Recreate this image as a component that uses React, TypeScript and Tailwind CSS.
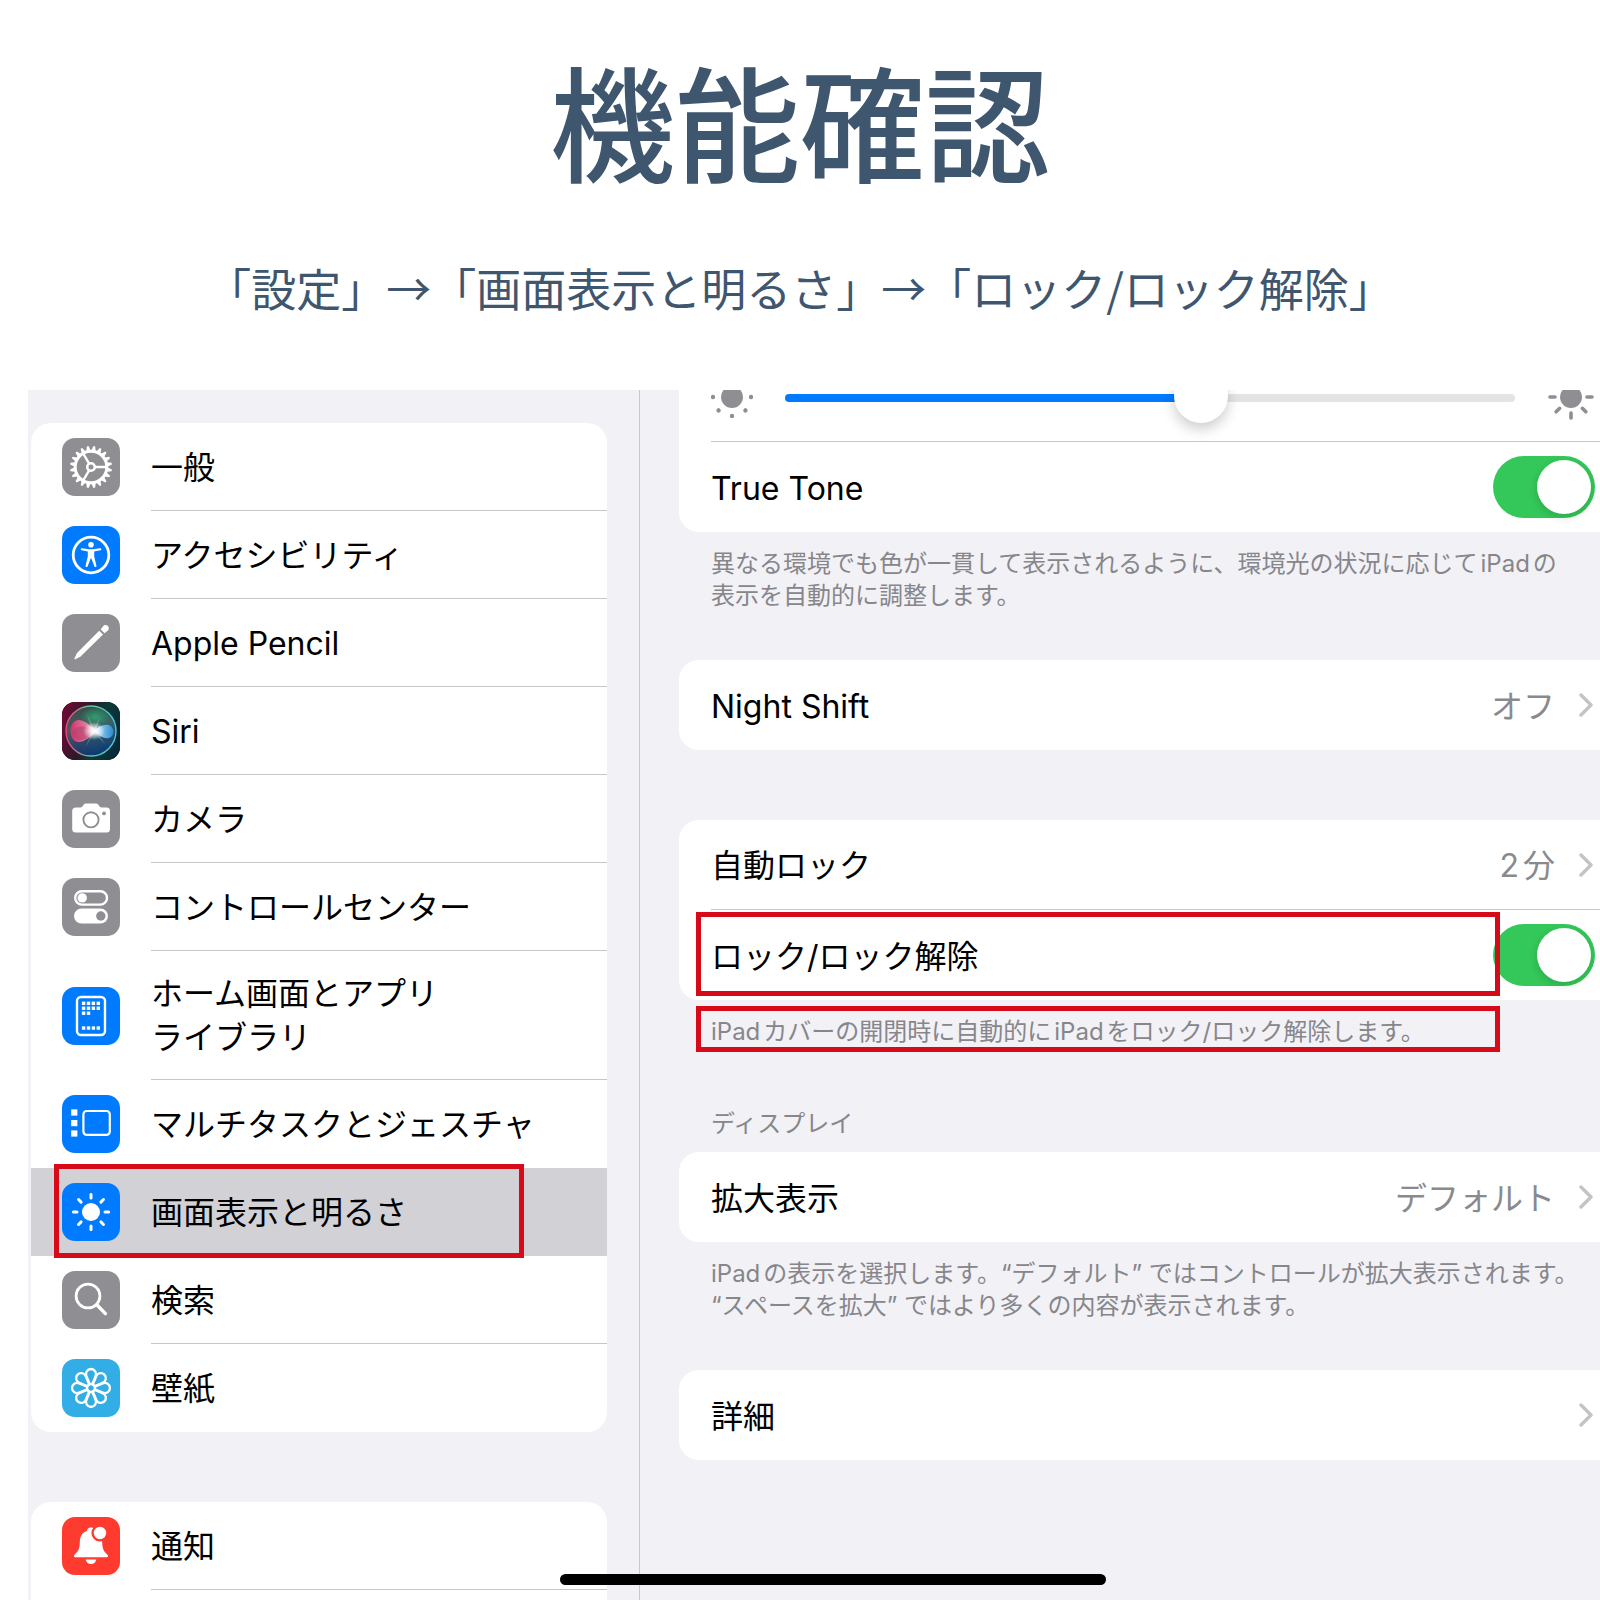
import { useState } from "react"
import type { ReactNode } from "react"

type MenuItem = {
    title: string[];
    icon: ReactNode;
    tint: string;
    line: boolean;
    tall?: boolean;
    selected?: boolean;
}

const rays = [0, 45, 90, 135, 180, 225, 270, 315];
const teeth = Array.from({ length: 20 }, (_, i) => (i * 360) / 20 + 9);

function GearIcon() {
    return (
        <g>
            <circle cx="29" cy="29" r="15.8" fill="none" stroke="#fff" strokeWidth="3" />
            {teeth.map((angle) => (
                <path key={angle} d="M26.9 12.4 L28.1 8 H29.9 L31.1 12.4 Z" fill="#fff" transform={`rotate(${angle} 29 29)`} />
            ))}
            {[0, 120, 240].map((angle) => (
                <path key={angle} d="M32.5 29 H44" stroke="#fff" strokeWidth="2.4" transform={`rotate(${angle} 29 29)`} />
            ))}
            <circle cx="29" cy="29" r="3.8" fill="none" stroke="#fff" strokeWidth="2.6" />
        </g>
    );
}

function AccessibilityIcon() {
    return (
        <g>
            <circle cx="29" cy="29" r="17.8" fill="none" stroke="#fff" strokeWidth="2.8" />
            <circle cx="29" cy="18.8" r="2.8" fill="#fff" />
            <path
                d="M19.8 22.3 L27 23.2 H31 L38.2 22.3 A1 1 0 0 1 38.4 24.3 L32.2 25.6 V30.5 L34.4 39.6 A1.1 1.1 0 0 1 32.3 40.3 L29.4 32.6 H28.6 L25.7 40.3 A1.1 1.1 0 0 1 23.6 39.6 L25.8 30.5 V25.6 L19.6 24.3 A1 1 0 0 1 19.8 22.3 Z"
                fill="#fff"
            />
        </g>
    );
}

function PencilIcon() {
    return (
        <g fill="#fff">
            <path d="M37.2 16.8 L41 20.6 L18.6 42.6 L13.4 45.2 Q12 45.6 12.5 44.2 L15 38.9 Z" />
            <path d="M38.7 15.4 L40.5 13.1 A3.3 3.3 0 1 1 45 17.3 L42.6 19.3 Z" />
        </g>
    );
}

function SiriIcon() {
    return (
        <g>
            <defs>
                <linearGradient id="siri-back" x1="0" y1="0.3" x2="1" y2="0.6">
                    <stop offset="0" stopColor="#6b0a35" />
                    <stop offset="0.4" stopColor="#2b1a2c" />
                    <stop offset="0.65" stopColor="#0d3a36" />
                    <stop offset="1" stopColor="#062a3a" />
                </linearGradient>
                <linearGradient id="siri-orb" x1="0.2" y1="0" x2="0.4" y2="1">
                    <stop offset="0" stopColor="#2b6a50" />
                    <stop offset="0.45" stopColor="#4f7478" />
                    <stop offset="1" stopColor="#0c3c8c" />
                </linearGradient>
                <linearGradient id="siri-ring" x1="0" y1="0" x2="1" y2="0">
                    <stop offset="0" stopColor="#e8457c" />
                    <stop offset="0.5" stopColor="#63c79b" />
                    <stop offset="1" stopColor="#4cc3e0" />
                </linearGradient>
                <linearGradient id="siri-pink" x1="0" y1="0" x2="1" y2="0">
                    <stop offset="0" stopColor="#e0306c" stopOpacity="0.9" />
                    <stop offset="1" stopColor="#f7b3cc" stopOpacity="0.9" />
                </linearGradient>
                <linearGradient id="siri-blue" x1="0" y1="0" x2="1" y2="0">
                    <stop offset="0" stopColor="#c9efff" />
                    <stop offset="1" stopColor="#2a94e0" stopOpacity="0.85" />
                </linearGradient>
                <radialGradient id="siri-green">
                    <stop offset="0" stopColor="#2fae76" stopOpacity="0.8" />
                    <stop offset="1" stopColor="#2fae76" stopOpacity="0" />
                </radialGradient>
                <radialGradient id="siri-glow">
                    <stop offset="0" stopColor="#fff" />
                    <stop offset="0.35" stopColor="#fff" stopOpacity="0.8" />
                    <stop offset="1" stopColor="#fff" stopOpacity="0" />
                </radialGradient>
            </defs>
            <rect width="58" height="58" fill="url(#siri-back)" />
            <circle cx="29" cy="29" r="25" fill="url(#siri-orb)" fillOpacity="0.7" stroke="url(#siri-ring)" strokeWidth="1.4" />
            <ellipse cx="33" cy="15" rx="15" ry="10" fill="url(#siri-green)" />
            <path d="M34 29 C28 23 23 18 16 18 C6 19 6 39 16 40 C23 40 28 35 34 29 Z" fill="url(#siri-pink)" />
            <path d="M31 30 C24 22 12 23 10 32 C13 40 23 41 31 30 Z" fill="#b83a68" fillOpacity="0.55" />
            <path d="M32 29 C37 24 42 22 47 23 C53 26 53 34 47 36 C42 37 37 34 32 29 Z" fill="url(#siri-blue)" />
            <path d="M25 12 L32 26 L38 15 L34 28 L43 42 L32 31 L23 46 L30 30 Z" fill="#fff" fillOpacity="0.22" />
            <ellipse cx="32" cy="29" rx="11" ry="9" fill="url(#siri-glow)" />
        </g>
    );
}

function CameraIcon() {
    return (
        <g>
            <path
                d="M14 17.4 H18.5 Q20 17.4 21 15.8 L21.8 14.5 Q22.5 13.4 24 13.4 H34 Q35.5 13.4 36.2 14.5 L37 15.8 Q38 17.4 39.5 17.4 H44.5 Q48 17.4 48 20.9 V39 Q48 42.6 44.5 42.6 H13.8 Q10.2 42.6 10.2 39 V20.9 Q10.2 17.4 14 17.4 Z"
                fill="#fff"
            />
            <circle cx="29" cy="29.8" r="7.6" fill="none" stroke="#8e8e93" strokeWidth="1.9" />
            <circle cx="42" cy="23.4" r="1.9" fill="#8e8e93" />
        </g>
    );
}

function SwitchesIcon() {
    return (
        <g>
            <rect x="13.2" y="13.2" width="31.8" height="13.4" rx="6.7" fill="none" stroke="#fff" strokeWidth="2.4" />
            <circle cx="20.2" cy="19.9" r="4.7" fill="#fff" />
            <rect x="12" y="30.6" width="34" height="14.8" rx="7.4" fill="#fff" />
            <circle cx="38.8" cy="38" r="4.7" fill="#8e8e93" />
        </g>
    );
}

function HomeScreenIcon() {
    const dots = [
        [0, 0], [1, 0], [2, 0], [3, 0],
        [0, 1], [1, 1], [2, 1], [3, 1],
        [0, 2], [1, 2],
        [0, 5], [1, 5], [2, 5], [3, 5],
    ];
    return (
        <g>
            <rect x="15" y="10" width="28" height="38" rx="4" fill="none" stroke="#fff" strokeWidth="2.4" />
            {dots.map(([x, y]) => (
                <rect key={`${x}-${y}`} x={19.9 + x * 4.9} y={14.6 + y * 4.95} width="3.4" height="3.4" fill="#fff" />
            ))}
        </g>
    );
}

function MultitaskIcon() {
    return (
        <g>
            <rect x="9.2" y="14.4" width="6.2" height="6.2" fill="#fff" />
            <rect x="9.2" y="25" width="6.2" height="6.2" fill="#fff" />
            <rect x="9.2" y="35.4" width="6.2" height="6.2" fill="#fff" />
            <rect x="21.4" y="16" width="26.4" height="23.8" rx="3.2" fill="none" stroke="#fff" strokeWidth="2.2" />
        </g>
    );
}

function SunIcon() {
    return (
        <g>
            <circle cx="29" cy="29" r="9" fill="#fff" />
            {rays.map((angle) => (
                <path key={angle} d="M43 29 H46.6" stroke="#fff" strokeWidth="3" strokeLinecap="round" transform={`rotate(${angle} 29 29)`} />
            ))}
        </g>
    );
}

function SearchIcon() {
    return (
        <g fill="none" stroke="#fff" strokeLinecap="round">
            <circle cx="26" cy="25" r="11.9" strokeWidth="2.8" />
            <path d="M34.8 33.8 L43.4 42.6" strokeWidth="3.4" />
        </g>
    );
}

function FlowerIcon() {
    return (
        <g fill="none" stroke="#fff" strokeWidth="2.3">
            {rays.map((angle) => (
                <path key={angle} d="M28 26 L24.5 17.2 A5 5 0 1 1 33.5 17.2 L30 26" transform={`rotate(${angle} 29 29)`} />
            ))}
            <circle cx="29" cy="29" r="4" strokeWidth="2.6" />
        </g>
    );
}

function BellIcon() {
    return (
        <g>
            <path
                d="M29 10.4 C31.6 10.4 33 12 33.2 14 C38 16 40 20 40.2 25 C40.4 32 41.6 34 45 37.2 C46.8 39 46 40.2 44.4 40.2 H13.6 C12 40.2 11.2 39 13 37.2 C16.4 34 17.6 32 17.8 25 C18 19 20.4 15.4 24.8 14 C25 12 26.4 10.4 29 10.4 Z"
                fill="#fff"
            />
            <path d="M23.6 42.4 H34.4 C33.6 45.6 31.6 47 29 47 C26.4 47 24.4 45.6 23.6 42.4 Z" fill="#fff" />
            <circle cx="38" cy="16" r="7.4" fill="#fff" stroke="#ff3b30" strokeWidth="2.4" />
        </g>
    );
}

const menu: MenuItem[] = [
    { title: ["一般"], icon: <GearIcon />, tint: "bg-[#8e8e93]", line: true },
    { title: ["アクセシビリティ"], icon: <AccessibilityIcon />, tint: "bg-[#007aff]", line: true },
    { title: ["Apple Pencil"], icon: <PencilIcon />, tint: "bg-[#8e8e93]", line: true },
    { title: ["Siri"], icon: <SiriIcon />, tint: "bg-black", line: true },
    { title: ["カメラ"], icon: <CameraIcon />, tint: "bg-[#8e8e93]", line: true },
    { title: ["コントロールセンター"], icon: <SwitchesIcon />, tint: "bg-[#8e8e93]", line: true },
    { title: ["ホーム画面とアプリ", "ライブラリ"], icon: <HomeScreenIcon />, tint: "bg-[#007aff]", line: true, tall: true },
    { title: ["マルチタスクとジェスチャ"], icon: <MultitaskIcon />, tint: "bg-[#007aff]", line: false },
    { title: ["画面表示と明るさ"], icon: <SunIcon />, tint: "bg-[#007aff]", line: false, selected: true },
    { title: ["検索"], icon: <SearchIcon />, tint: "bg-[#8e8e93]", line: true },
    { title: ["壁紙"], icon: <FlowerIcon />, tint: "bg-[#32ade6]", line: false },
];

const notifications: MenuItem = { title: ["通知"], icon: <BellIcon />, tint: "bg-[#ff3b30]", line: true };

function MenuRow({ item }: { item: MenuItem }) {
    return (
        <a
            href="#"
            className={`relative flex items-center gap-[31px] pl-[31px] ${item.tall ? "h-[129px]" : "h-[88px]"} ${item.selected ? "bg-[#d1d1d6]" : ""}`}
        >
            <span className={`size-[58px] shrink-0 overflow-hidden rounded-[13px] ${item.tint}`}>
                <svg viewBox="0 0 58 58" className="size-full" aria-hidden="true">{item.icon}</svg>
            </span>
            <span className={`flex h-full flex-1 flex-col justify-center border-b pt-0.5 text-[32px] leading-[44px] ${item.line ? "border-[#c6c6c8]" : "border-transparent"}`}>
                {item.title.map((part) => (
                    <span key={part} className="whitespace-nowrap">{part}</span>
                ))}
            </span>
            {item.selected && <Marker className="-top-1 -bottom-0.5 left-[23px] w-[470px]" />}
        </a>
    );
}

/* red frame laid over the parts being explained */
function Marker({ className }: { className: string }) {
    return <span className={`pointer-events-none absolute border-[5px] border-[#d70a19] ${className}`} />;
}

function Toggle({ id }: { id: string }) {
    const [on, setOn] = useState(true);

    return (
        <span className="relative h-[62px] w-[102px] shrink-0">
            <input
                id={id}
                type="checkbox"
                role="switch"
                checked={on}
                onChange={() => setOn(!on)}
                className="block size-full cursor-pointer appearance-none rounded-full bg-[#e9e9eb] checked:bg-[#34c759]"
            />
            <span className={`pointer-events-none absolute top-1 size-[54px] rounded-full bg-white shadow-[0_3px_8px_rgba(0,0,0,0.15)] ${on ? "right-1" : "left-1"}`} />
        </span>
    );
}

function Chevron() {
    return (
        <svg viewBox="0 0 14 24" className="h-6 w-3.5 shrink-0" fill="none" stroke="#c4c4c7" strokeWidth="3.4" strokeLinecap="round" strokeLinejoin="round" aria-hidden="true">
            <path d="M2 2 L12 12 L2 22" />
        </svg>
    );
}

function Card({ children }: { children: ReactNode }) {
    return <div className="rounded-l-[20px] bg-white pl-8">{children}</div>;
}

function LinkRow({ title, value, line }: { title: string; value?: string; line?: boolean }) {
    return (
        <a href="#" className={`flex h-[90px] items-center pr-[7px] text-[32px] leading-[44px] ${line ? "border-b border-[#c6c6c8]" : ""}`}>
            <span className="flex-1 pt-[3px]">{title}</span>
            <span className="pt-[3px] pr-6 text-[#8a8a8e]">{value}</span>
            <Chevron />
        </a>
    );
}

function Note({ lines }: { lines: string[] }) {
    return (
        <p className="pt-4 pl-8 text-[24px] leading-8 text-[#86868b]">
            {lines.map((line) => (
                <span key={line} className="block whitespace-nowrap">{line}</span>
            ))}
        </p>
    );
}

export default function App() {
    const [brightness, setBrightness] = useState(57.5);

    return (
        <div className="relative flex h-screen flex-col overflow-hidden bg-white font-[Inter,'Noto_Sans_CJK_JP',sans-serif] text-black [text-autospace:normal]">
            <header className="flex h-[390px] shrink-0 flex-col items-center pt-11 font-['Noto_Sans_CJK_JP',sans-serif] text-[#3f566f]">
                <h1 className="text-[125px] leading-[150px] font-medium">機能確認</h1>
                <p className="pt-16 text-[45px] leading-[60px] whitespace-nowrap">「設定」→「画面表示と明るさ」→「ロック/ロック解除」</p>
            </header>

            <div className="ml-7 flex min-h-0 flex-1 bg-[#f2f1f6]">
                {/* sidebar */}
                <nav className="flex w-[612px] shrink-0 flex-col border-r border-[#c9c9cd] pt-[33px] pr-8 pl-[3px]">
                    <div className="rounded-[20px] bg-white">
                        {menu.map((item) => (
                            <MenuRow key={item.title[0]} item={item} />
                        ))}
                    </div>
                    <div className="mt-[70px] flex-1 rounded-t-[20px] bg-white">
                        <MenuRow item={notifications} />
                    </div>
                </nav>

                {/* detail, scrolled down a little */}
                <main className="min-w-0 flex-1 overflow-hidden pl-[39px]">
                    <div className="-mt-[38px]">
                        <Card>
                            <div className="flex h-[90px] items-center border-b border-[#c6c6c8] pr-[5px]">
                                <svg viewBox="0 0 42 42" className="size-[42px] shrink-0" fill="#8e8e93" aria-hidden="true">
                                    <circle cx="21" cy="21" r="11" />
                                    {rays.map((angle) => (
                                        <circle key={angle} cx="40" cy="21" r="2.2" transform={`rotate(${angle} 21 21)`} />
                                    ))}
                                </svg>
                                <input
                                    type="range"
                                    aria-label="明るさ"
                                    min={0}
                                    max={100}
                                    step={0.5}
                                    value={brightness}
                                    onChange={(e) => setBrightness(Number(e.target.value))}
                                    style={{ backgroundImage: `linear-gradient(to right, #007aff ${brightness}%, #e4e4e6 ${brightness}%)` }}
                                    className="mx-8 mt-0.5 h-2 min-w-0 flex-1 appearance-none rounded-full [&::-webkit-slider-thumb]:mt-[-4px] [&::-webkit-slider-thumb]:size-[54px] [&::-webkit-slider-thumb]:appearance-none [&::-webkit-slider-thumb]:rounded-full [&::-webkit-slider-thumb]:bg-white [&::-webkit-slider-thumb]:shadow-[0_6px_14px_rgba(0,0,0,0.2)]"
                                />
                                <svg viewBox="0 0 48 48" className="size-12 shrink-0" fill="#8e8e93" aria-hidden="true">
                                    <circle cx="24" cy="24" r="11" />
                                    {rays.map((angle) => (
                                        <path key={angle} d="M40 24 H45" stroke="#8e8e93" strokeWidth="3.6" strokeLinecap="round" transform={`rotate(${angle} 24 24)`} />
                                    ))}
                                </svg>
                            </div>
                            <div className="flex h-[90px] items-center justify-between pr-[5px] text-[32px] leading-[44px]">
                                <label htmlFor="true-tone" className="pt-[3px]">True Tone</label>
                                <Toggle id="true-tone" />
                            </div>
                        </Card>
                        <Note lines={["異なる環境でも色が一貫して表示されるように、環境光の状況に応じてiPadの", "表示を自動的に調整します。"]} />

                        <div className="mt-12">
                            <Card>
                                <LinkRow title="Night Shift" value="オフ" />
                            </Card>
                        </div>

                        <div className="mt-[70px]">
                            <Card>
                                <LinkRow title="自動ロック" value="2分" line />
                                <div className="relative flex h-[90px] items-center justify-between pr-[5px] text-[32px] leading-[44px]">
                                    <label htmlFor="lock-unlock" className="pt-[3px]">ロック/ロック解除</label>
                                    <Toggle id="lock-unlock" />
                                    <Marker className="top-0.5 right-[100px] bottom-1 -left-[15px]" />
                                </div>
                            </Card>
                            <div className="relative">
                                <Note lines={["iPadカバーの開閉時に自動的にiPadをロック/ロック解除します。"]} />
                                <Marker className="top-1.5 right-[100px] -bottom-1 left-[17px]" />
                            </div>
                        </div>

                        <h2 className="mt-[60px] pb-3 pl-8 text-[24px] leading-8 text-[#86868b]">ディスプレイ</h2>
                        <Card>
                            <LinkRow title="拡大表示" value="デフォルト" />
                        </Card>
                        <Note lines={["iPadの表示を選択します。“デフォルト” ではコントロールが拡大表示されます。", "“スペースを拡大” ではより多くの内容が表示されます。"]} />

                        <div className="mt-12">
                            <Card>
                                <LinkRow title="詳細" />
                            </Card>
                        </div>
                    </div>
                </main>
            </div>

            {/* home indicator */}
            <div className="absolute bottom-[15px] left-[35%] h-[11px] w-[546px] rounded-full bg-black" />
        </div>
    );
}
